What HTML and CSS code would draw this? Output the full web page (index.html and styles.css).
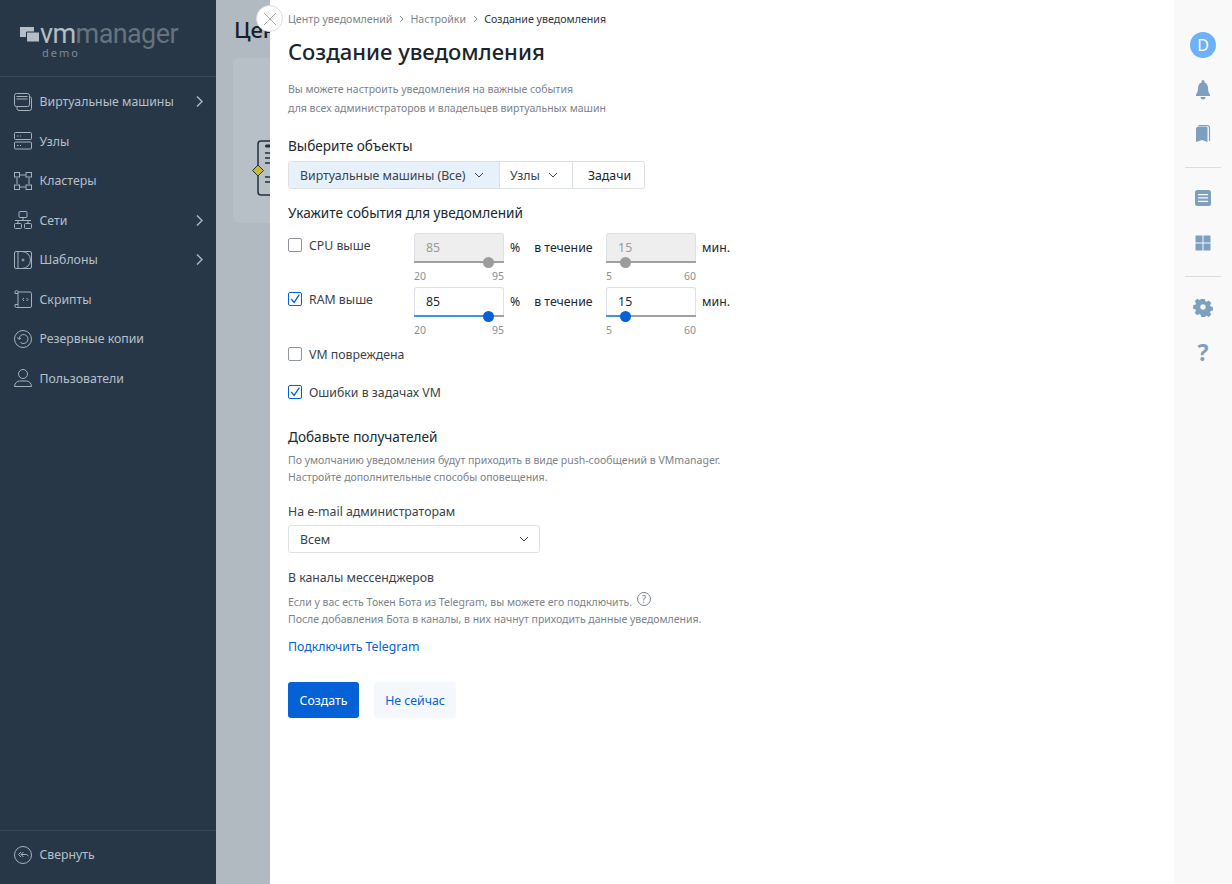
FILE: index.html
```html
<!DOCTYPE html>
<html lang="ru">
<head>
    <meta charset="UTF-8">
    <title>Создание уведомления</title>
    <link rel="stylesheet" href="styles.css">
</head>
<body>
    <aside class="sidebar">
        <div class="logo">
            <div class="logo-row">
                <svg class="logo-mark" viewBox="0 0 21 16"><path d="M1 1h14v10H1z" fill="#b5bdc5"/><path d="M7.500 6h13v10h-13z" fill="#b5bdc5" stroke="#273748"/></svg>
                <span class="logo-vm">vm</span><span class="logo-manager">manager</span>
            </div>
            <div class="logo-demo">demo</div>
        </div>
        <nav class="menu">
            <a class="menu-item">
                <svg class="menu-icon" viewBox="0 0 18 18"><rect x=".5" y=".5" width="15" height="13" rx="2"/><path d="M2.500 3.500h11M2.500 6h11M15.500 4h.5a1.500 1.500 0 0 1 1.500 1.500v10a2 2 0 0 1-2 2H5a2 2 0 0 1-2-2v-1.500"/></svg>
                <span>Виртуальные машины</span>
                <svg class="menu-arrow" viewBox="0 0 7 11"><path d="M1 .5l5 5-5 5"/></svg>
            </a>
            <a class="menu-item">
                <svg class="menu-icon" viewBox="0 0 18 18"><rect x=".5" y=".5" width="17" height="7" rx="1"/><rect x=".5" y="10" width="17" height="7" rx="1"/><path d="M3 4h1.500M6 4h1M3 13.500h1.500M6 13.500h1"/></svg>
                <span>Узлы</span>
            </a>
            <a class="menu-item">
                <svg class="menu-icon" viewBox="0 0 18 18"><rect x=".5" y=".5" width="5" height="4.500"/><rect x="12" y=".5" width="5.500" height="4.500"/><rect x=".5" y="13" width="5" height="4.500"/><rect x="12" y="13" width="5.500" height="4.500"/><path d="M6 3h5.500M6 15h5.500M3 6v6M15 6v6"/></svg>
                <span>Кластеры</span>
            </a>
            <a class="menu-item">
                <svg class="menu-icon" viewBox="0 0 18 18"><rect x="5" y=".5" width="8" height="6" rx="1"/><path d="M1 9.500h16M9 6.500v3M4 9.500v3M14 9.500v3"/><rect x=".5" y="12.500" width="7" height="5" rx="1"/><rect x="10.500" y="12.500" width="7" height="5" rx="1"/></svg>
                <span>Сети</span>
                <svg class="menu-arrow" viewBox="0 0 7 11"><path d="M1 .5l5 5-5 5"/></svg>
            </a>
            <a class="menu-item">
                <svg class="menu-icon" viewBox="0 0 18 18"><rect x=".5" y=".5" width="17" height="17" rx="1.500"/><path d="M4 .5v17M4 .5h4a8.500 8.500 0 0 1 0 17H4"/><circle cx="9" cy="9" r="1"/></svg>
                <span>Шаблоны</span>
                <svg class="menu-arrow" viewBox="0 0 7 11"><path d="M1 .5l5 5-5 5"/></svg>
            </a>
            <a class="menu-item">
                <svg class="menu-icon" viewBox="0 0 18 18"><path d="M4 3V2a1.500 1.500 0 0 0-3 0v1.500h3M4 2h12a1.500 1.500 0 0 1 1.500 1.500v12.500a1.500 1.500 0 0 1-1.500 1.500H2.500a1.500 1.500 0 0 1-1.500-1.500V14.500h3v2M4 3v11.500"/><path d="M10 8l-1.500 1.500L10 11M12.500 8L14 9.500 12.500 11"/></svg>
                <span>Скрипты</span>
            </a>
            <a class="menu-item">
                <svg class="menu-icon" viewBox="0 0 18 18"><circle cx="9" cy="9" r="8.500"/><path d="M5 9a4.500 4.500 0 1 1 1.500 3.400M3.500 7.500L5 9.500l2-1.500"/></svg>
                <span>Резервные копии</span>
            </a>
            <a class="menu-item">
                <svg class="menu-icon" viewBox="0 0 18 18"><ellipse cx="9" cy="5" rx="4.500" ry="4.500"/><path d="M.5 17.500c0-3.500 3-5.500 5-5.500h7c2 0 5 2 5 5.500z"/></svg>
                <span>Пользователи</span>
            </a>
        </nav>
        <div class="collapse">
            <a class="menu-item">
                <svg class="menu-icon" viewBox="0 0 18 18"><circle cx="9" cy="9" r="8.500"/><path d="M7 6L4.500 8.500 7 11M9.500 6L7 8.500 9.500 11M7 8.500h5.500l2 1.500"/></svg>
                <span>Свернуть</span>
            </a>
        </div>
    </aside>

    <main class="backdrop">
        <h2 class="backdrop-title">Цен</h2>
        <div class="backdrop-card">
            <svg class="backdrop-icon" width="40" height="60" viewBox="0 0 40 60"><rect x="10" y="2" width="40" height="54" rx="3" fill="none" stroke="#20303f" stroke-width="1.500"/><rect x="17" y="5.500" width="10" height="3" rx="1.500" fill="#20303f"/><path d="M17 14h14M17 19h14M17 24h14M17 38h14M17 43h14" stroke="#20303f" stroke-width="1.500"/><path d="M10 26l5.500 5.500-5.500 5.500-5.500-5.500z" fill="#c9b92e" stroke="#20303f"/></svg>
        </div>
    </main>

    <section class="panel">
        <button class="close" type="button">
            <svg width="14" height="14" viewBox="0 0 14 14"><path d="M1 1l12 12M13 1L1 13"/></svg>
        </button>
        <div class="breadcrumbs">
            <span>Центр уведомлений</span>
            <svg class="crumb-sep" viewBox="0 0 5 8"><path d="M1 1l3 3-3 3"/></svg>
            <span>Настройки</span>
            <svg class="crumb-sep" viewBox="0 0 5 8"><path d="M1 1l3 3-3 3"/></svg>
            <span class="current">Создание уведомления</span>
        </div>
        <h1>Создание уведомления</h1>
        <p class="hint intro">Вы можете настроить уведомления на важные события<br>для всех администраторов и владельцев виртуальных машин</p>

        <h3 class="objects-title">Выберите объекты</h3>
        <div class="tabs">
            <div class="tab active">Виртуальные машины (Все)<svg class="chevron" viewBox="0 0 10 6"><path d="M1 1l4 4 4-4"/></svg></div>
            <div class="tab">Узлы<svg class="chevron" viewBox="0 0 10 6"><path d="M1 1l4 4 4-4"/></svg></div>
            <div class="tab plain">Задачи</div>
        </div>

        <h3 class="events-title">Укажите события для уведомлений</h3>
        <div class="event-row first-row">
            <label class="check"><span class="box"></span>CPU выше</label>
            <div class="sliders">
                <div class="field disabled">
                    <div class="input">85</div>
                    <div class="track"><b style="width: 82.5%"></b></div>
                    <div class="limits"><span>20</span><span>95</span></div>
                </div>
                <span class="unit">%</span>
                <span class="during">в течение</span>
                <div class="field disabled">
                    <div class="input">15</div>
                    <div class="track"><b style="width: 21.5%"></b></div>
                    <div class="limits"><span>5</span><span>60</span></div>
                </div>
                <span class="unit">мин.</span>
            </div>
        </div>
        <div class="event-row">
            <label class="check"><span class="box on"><svg viewBox="0 0 14 14"><path d="M2.500 7l3.500 4 6-9"/></svg></span>RAM выше</label>
            <div class="sliders">
                <div class="field">
                    <div class="input">85</div>
                    <div class="track"><b style="width: 82.5%"></b></div>
                    <div class="limits"><span>20</span><span>95</span></div>
                </div>
                <span class="unit">%</span>
                <span class="during">в течение</span>
                <div class="field">
                    <div class="input">15</div>
                    <div class="track"><b style="width: 21.5%"></b></div>
                    <div class="limits"><span>5</span><span>60</span></div>
                </div>
                <span class="unit">мин.</span>
            </div>
        </div>
        <label class="check single"><span class="box"></span>VM повреждена</label>
        <label class="check single errors"><span class="box on"><svg viewBox="0 0 14 14"><path d="M2.500 7l3.500 4 6-9"/></svg></span>Ошибки в задачах VM</label>

        <h3 class="recipients-title">Добавьте получателей</h3>
        <p class="hint recipients-hint">По умолчанию уведомления будут приходить в виде push-сообщений в VMmanager.<br>Настройте дополнительные способы оповещения.</p>

        <div class="label email-label">На e-mail администраторам</div>
        <div class="select">Всем<svg class="chevron" viewBox="0 0 10 6"><path d="M1 1l4 4 4-4"/></svg></div>

        <div class="label channels-label">В каналы мессенджеров</div>
        <p class="hint channels-hint">Если у вас есть Токен Бота из Telegram, вы можете его подключить. <span class="help">?</span><br>После добавления Бота в каналы, в них начнут приходить данные уведомления.</p>
        <a class="link">Подключить Telegram</a>

        <div class="actions">
            <button class="btn primary" type="button">Создать</button>
            <button class="btn secondary" type="button">Не сейчас</button>
        </div>
    </section>

    <aside class="rail">
        <div class="avatar">D</div>
        <div class="rail-group">
            <svg class="rail-icon" viewBox="0 0 20 20"><path d="M10 0a1.500 1.500 0 0 1 1.500 1.500v.9C14 3.200 15 5.500 15 8c0 3.500.8 5 2 6.500V16H3v-1.500C4.200 13 5 11.500 5 8c0-2.500 1-4.800 3.500-5.600v-.9A1.500 1.500 0 0 1 10 0zM7.500 17h5a2.500 2.500 0 0 1-5 0z"/></svg>
            <svg class="rail-icon" viewBox="0 0 20 20"><path d="M3 5c0-1.500 1-2.500 2.500-2.500H13c1 0 1.500.7 1.500 1.500v14L9 16l-6 2z"/><path class="rail-stroke" d="M5.500 1.500H14c1.500 0 2.500 1 2.500 2.500v13"/></svg>
        </div>
        <div class="rail-line"></div>
        <div class="rail-group">
            <svg class="rail-icon" viewBox="0 0 20 20"><path fill-rule="evenodd" d="M4.500 2h11A2.500 2.500 0 0 1 18 4.500v11a2.500 2.500 0 0 1-2.500 2.500h-11A2.500 2.500 0 0 1 2 15.500v-11A2.500 2.500 0 0 1 4.500 2zM5 6v1.300h10V6zm0 3.300v1.300h10V9.300zm0 3.400V14h10v-1.300z"/></svg>
            <svg class="rail-icon" viewBox="0 0 20 20"><path d="M2.500 2.500h7v7h-7zM10.500 2.500h7v7h-7zM2.500 10.500h7v7h-7zM10.500 10.500h7v7h-7z"/></svg>
        </div>
        <div class="rail-line"></div>
        <div class="rail-group last">
            <svg class="rail-icon" viewBox="0 0 20 20"><path fill-rule="evenodd" d="M8 1h4l.5 2.500 1.700.7 2.200-1.400 2.800 2.800-1.400 2.200.7 1.700 2.500.5v4l-2.500.5-.7 1.700 1.400 2.200-2.800 2.800-2.200-1.400-1.700.7L12 21H8l-.5-2.500-1.700-.7-2.200 1.400-2.800-2.800 1.400-2.200-.7-1.700L-1 12V8l2.500-.5.7-1.700-1.400-2.200 2.800-2.800 2.200 1.400 1.700-.7zM10 7a3 3 0 1 0 0 6 3 3 0 0 0 0-6z" transform="translate(1 1) scale(.9)"/></svg>
            <div class="rail-help">?</div>
        </div>
    </aside>
</body>
</html>
```

FILE: styles.css
```css
* {
    box-sizing: border-box;
}
body {
    margin: 0;
    height: 884px;
    display: flex;
    overflow: hidden;
    font-family: 'Noto Sans', sans-serif;
    font-size: 12.3px;
    color: #20282f;
    background: #b2bac1;
}
p, h1, h2, h3 {
    margin: 0;
    font-weight: 400;
}
h3 {
    font-size: 13.6px;
    line-height: 18px;
}

/* left menu */
.sidebar {
    width: 216px;
    flex: none;
    display: flex;
    flex-direction: column;
    background: #273748;
    color: #b6c0ca;
}
.logo {
    height: 77px;
    padding: 22px 0 0 19px;
    border-bottom: 1px solid #39495a;
}
.logo-row {
    display: flex;
    align-items: center;
    height: 24px;
    font-family: Roboto, sans-serif;
    font-size: 27px;
    line-height: 24px;
    letter-spacing: -.6px;
}
.logo-mark {
    width: 21px;
    height: 16px;
    margin-right: 0;
}
.logo-vm {
    color: #b5bdc5;
}
.logo-manager {
    color: #66737f;
}
.logo-demo {
    margin-left: 23px;
    font-size: 11px;
    line-height: 13px;
    letter-spacing: 2px;
    color: #7f8b97;
}
.menu {
    flex: 1;
    padding-top: 4.8px;
}
.menu-item {
    display: flex;
    align-items: center;
    height: 39.5px;
    padding: 0 13px 0 14px;
}
.menu-item span {
    flex: 1;
    margin-left: 7.5px;
}
.menu-icon {
    width: 18px;
    height: 18px;
    flex: none;
    fill: none;
    stroke: #a6b1bc;
    stroke-width: 1;
}
.menu-arrow {
    width: 7px;
    height: 11px;
    flex: none;
    fill: none;
    stroke: #a9b4bf;
    stroke-width: 1.5;
}
.collapse {
    height: 54px;
    padding-top: 4px;
    border-top: 1px solid #39495a;
}

/* page behind the panel */
.backdrop {
    width: 54px;
    flex: none;
    overflow: hidden;
    padding: 16px 0 0 18px;
}
.backdrop-title {
    font-size: 22px;
    line-height: 26px;
    font-weight: 500;
    white-space: nowrap;
    color: #16202a;
}
.backdrop-card {
    width: 300px;
    height: 165px;
    margin: 16px 0 0 -1px;
    padding: 81px 0 0 15px;
    background: #b8c0c7;
    border-radius: 6px;
}

/* panel */
.panel {
    position: relative;
    flex: 1;
    padding: 12px 18px 0;
    background: #fff;
}
.close {
    position: absolute;
    top: 5px;
    left: -14px;
    width: 27px;
    height: 27px;
    padding: 0;
    display: flex;
    align-items: center;
    justify-content: center;
    background: #fff;
    border: 1px solid #d9dde1;
    border-radius: 50%;
}
.close svg {
    stroke: #a3abb3;
    fill: none;
}
.breadcrumbs {
    display: flex;
    align-items: center;
    height: 14px;
    font-size: 10.65px;
    color: #7b838b;
}
.crumb-sep {
    width: 5px;
    height: 8px;
    margin: 0 6.5px;
    fill: none;
    stroke: #8b9299;
}
.breadcrumbs .current {
    color: #2f3740;
}
h1 {
    margin-top: 10px;
    font-size: 22px;
    line-height: 30px;
    font-weight: 500;
    color: #1c242c;
}
.hint {
    font-size: 10.5px;
    line-height: 17px;
    color: #7b838b;
}
.intro {
    margin-top: 14px;
    line-height: 19px;
}
.objects-title {
    margin-top: 19px;
}
.tabs {
    display: flex;
    width: max-content;
    height: 28px;
    margin-top: 6px;
    border: 1px solid #dde1e5;
    border-radius: 3px;
}
.tab {
    display: flex;
    align-items: center;
    padding: 0 14px 0 10px;
    color: #3a424a;
    border-right: 1px solid #dde1e5;
}
.tab.active {
    padding: 0 15px 0 11px;
    background: #e7f1fb;
}
.tab.plain {
    padding: 0 13px 0 14.5px;
    color: #20282f;
    border-right: 0;
}
.chevron {
    width: 10px;
    height: 6px;
    margin-left: 8.5px;
    fill: none;
    stroke: #3a424a;
}
.events-title {
    margin-top: 15px;
}
.event-row {
    display: flex;
    height: 54px;
}
.first-row {
    margin-top: 11px;
}
.event-row .check {
    width: 126px;
    margin-top: 1px;
}
.check {
    display: flex;
    align-items: center;
    height: 22px;
    color: #3a424a;
}
.box {
    display: flex;
    width: 14px;
    height: 14px;
    margin-right: 7px;
    background: #fff;
    border: 1px solid #8e959c;
    border-radius: 2px;
}
.box.on {
    border-color: #0561d6;
}
.box svg {
    fill: none;
    stroke: #0561d6;
    stroke-width: 1.5;
}
.single {
    margin-top: 2px;
}
.errors {
    margin-top: 16px;
}
.sliders {
    display: flex;
}
.field {
    width: 90px;
}
.input {
    height: 28px;
    padding-left: 11px;
    line-height: 28px;
    border: 1px solid #dde1e5;
    border-bottom: 0;
    border-radius: 3px 3px 0 0;
}
.track {
    position: relative;
    height: 2px;
    background: #a0a0a0;
}
.track b {
    position: absolute;
    left: 0;
    top: 0;
    height: 2px;
    background: #3d90ee;
}
.track b::after {
    content: "";
    position: absolute;
    right: -5.5px;
    top: -4.5px;
    width: 11px;
    height: 11px;
    border-radius: 50%;
    background: #0561d6;
}
.disabled .input {
    color: #9a9a9a;
    background: #eeeeee;
}
.disabled .track b {
    background: #a0a0a0;
}
.disabled .track b::after {
    background: #9c9c9c;
}
.limits {
    display: flex;
    justify-content: space-between;
    margin-top: 7px;
    font-size: 10.5px;
    line-height: 13px;
    color: #8a9097;
}
.unit, .during {
    height: 28px;
    line-height: 29px;
}
.unit {
    margin-left: 6px;
}
.during {
    margin: 0 13.5px 0 14px;
}
.recipients-title {
    margin-top: 25px;
}
.recipients-hint {
    margin-top: 6px;
}
.label {
    line-height: 18px;
    color: #3a424a;
}
.email-label {
    margin-top: 17px;
}
.select {
    display: flex;
    align-items: center;
    justify-content: space-between;
    width: 252px;
    height: 28px;
    margin-top: 4px;
    padding: 0 10px 0 11px;
    color: #3a424a;
    border: 1px solid #dde1e5;
    border-radius: 3px;
}
.channels-label {
    margin-top: 16px;
}
.channels-hint {
    margin-top: 7px;
}
.help {
    display: inline-block;
    width: 14px;
    height: 14px;
    margin: -4px 0 -4px 2px;
    font-size: 10px;
    line-height: 12px;
    text-align: center;
    vertical-align: 3px;
    border: 1px solid #7b838b;
    border-radius: 50%;
}
.link {
    display: block;
    margin-top: 10px;
    line-height: 18px;
    color: #0561d6;
}
.actions {
    display: flex;
    gap: 15px;
    margin-top: 26px;
}
.btn {
    width: 71px;
    height: 36px;
    padding: 0;
    font-family: inherit;
    font-size: 12.3px;
    border: 0;
    border-radius: 3px;
}
.primary {
    color: #fff;
    background: #0561d6;
}
.btn.secondary {
    width: 82px;
    color: #0561d6;
    background: #f4f8fc;
}

/* right rail */
.rail {
    width: 58px;
    flex: none;
    display: flex;
    flex-direction: column;
    align-items: center;
    padding-top: 32px;
    background: #f9f9f9;
}
.avatar {
    width: 26px;
    height: 26px;
    font-size: 16px;
    line-height: 26px;
    text-align: center;
    color: #fff;
    background: #6fb0fa;
    border-radius: 50%;
}
.rail-group {
    display: flex;
    flex-direction: column;
    align-items: center;
    gap: 24px;
    padding: 22px 0 23px;
}
.rail-line + .rail-group {
    padding-top: 20px;
    gap: 25px;
}
.rail-line + .rail-group.last {
    gap: 23px;
}
.rail-icon {
    width: 20px;
    height: 20px;
    fill: #7f9fbf;
}
.rail-stroke {
    fill: none;
    stroke: #7f9fbf;
    stroke-width: 1.2;
}
.rail-line {
    width: 36px;
    height: 1px;
    background: #dcdcdc;
}
.rail-help {
    font-size: 23px;
    line-height: 24px;
    font-weight: 700;
    color: #7f9fbf;
}
```
